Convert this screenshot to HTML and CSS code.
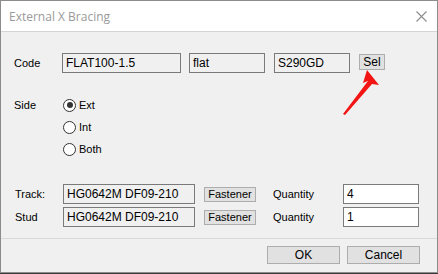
FILE: index.html
```html
<!DOCTYPE html>
<html lang="en">
<head>
    <meta charset="UTF-8">
    <link rel="stylesheet" href="styles.css">
    <title>External X Bracing</title>
</head>
<body>
    <div class="window">
        <div class="titlebar">
            <span class="title">External X Bracing</span>
            <svg class="close" width="11" height="11" viewBox="0 0 11 11">
                <path d="M0.5 0.5 L10.5 10.5 M10.5 0.5 L0.5 10.5" stroke="#8c8c8c" stroke-width="1.1" fill="none"/>
            </svg>
        </div>

        <div class="content">
            <div class="code-row">
                <label class="lbl">Code</label>
                <div class="field ro w-code">FLAT100-1.5</div>
                <div class="field ro w-flat">flat</div>
                <div class="field ro w-grade">S290GD</div>
                <button class="btn btn-sel">Sel</button>
            </div>

            <div class="side-row">
                <label class="lbl">Side</label>
                <div class="radios">
                    <div class="radio checked"><span class="dot"></span>Ext</div>
                    <div class="radio"><span class="dot"></span>Int</div>
                    <div class="radio"><span class="dot"></span>Both</div>
                </div>
            </div>

            <div class="parts">
                <div class="part-row">
                    <label class="lbl lbl-part">Track:</label>
                    <div class="field ro w-part">HG0642M DF09-210</div>
                    <button class="btn btn-fast">Fastener</button>
                    <label class="lbl-qty">Quantity</label>
                    <div class="field w-qty">4</div>
                </div>
                <div class="part-row">
                    <label class="lbl lbl-part">Stud</label>
                    <div class="field ro w-part">HG0642M DF09-210</div>
                    <button class="btn btn-fast">Fastener</button>
                    <label class="lbl-qty">Quantity</label>
                    <div class="field w-qty">1</div>
                </div>
            </div>
        </div>

        <div class="footer">
            <button class="btn btn-dlg">OK</button>
            <button class="btn btn-dlg">Cancel</button>
        </div>

        <!-- annotation arrow pointing at Sel -->
        <svg class="arrow" width="40" height="60" viewBox="0 0 40 60">
            <polygon points="26,2 38,17 31,16 4,47 2,46 27,13 22,15" fill="#f31414"/>
        </svg>
    </div>
</body>
</html>
```

FILE: styles.css
```css
body {
    margin: 0;
    background: #3a3a3a;
    font-family: "Liberation Sans", Arial, sans-serif;
    font-size: 11px;
    color: #000;
}

.window {
    position: relative;
    width: 436px;
    height: 271px;
    border: 1px solid #8c8c8c;
    background: #f0f0f0;
    display: flex;
    flex-direction: column;
}

.titlebar {
    height: 30px;
    background: #fff;
    border-bottom: 1px solid #d4d4d4;
    display: flex;
    align-items: center;
    justify-content: space-between;
    padding: 0 10px 0 8px;
}

.title {
    font-family: "Open Sans", "Noto Sans", sans-serif;
    font-size: 12px;
    color: #999;
}

.close {
    margin-top: 1px;
}

.content {
    flex: 1;
    padding: 21px 0 0 13px;
}

.lbl {
    width: 48px;
    flex: none;
}

.field {
    height: 20px;
    box-sizing: border-box;
    border: 1px solid #7a7a7a;
    background: #fff;
    padding: 0 3px;
    display: flex;
    align-items: center;
    font-size: 12px;
    white-space: nowrap;
}

.field.ro {
    background: #f0f0f0;
}

.btn {
    font-family: "Liberation Sans", Arial, sans-serif;
    font-size: 11px;
    color: #000;
    background: #e1e1e1;
    border: 1px solid #adadad;
    padding: 0;
    box-sizing: border-box;
}

.code-row {
    display: flex;
    align-items: flex-start;
    gap: 8px;
}

.code-row .lbl {
    width: 40px;
    line-height: 20px;
    font-size: 11px;
}

.w-code { width: 119px; }
.w-flat { width: 76px; }
.w-grade { width: 76px; margin-left: 1px; }

.btn-sel {
    width: 26px;
    height: 16px;
    margin-top: 1px;
    margin-left: 1px;
    font-size: 12px;
}

.side-row {
    display: flex;
    margin-top: 21px;
}

.side-row .lbl {
    line-height: 22px;
}

.radios {
    display: flex;
    flex-direction: column;
}

.radio {
    height: 22px;
    display: flex;
    align-items: center;
    gap: 3px;
    margin-left: 1px;
}

.dot {
    width: 11px;
    height: 11px;
    border: 1px solid #333;
    border-radius: 50%;
    background: #fff;
    position: relative;
}

.radio.checked .dot::after {
    content: "";
    position: absolute;
    left: 2.5px;
    top: 2.5px;
    width: 6px;
    height: 6px;
    border-radius: 50%;
    background: #333;
}

.parts {
    margin-top: 24px;
    display: flex;
    flex-direction: column;
    gap: 3px;
}

.part-row {
    display: flex;
    align-items: center;
}

.lbl-part {
    padding-left: 1px;
    width: 48px;
}

.w-part {
    width: 132px;
}

.btn-fast {
    width: 52px;
    height: 15px;
    margin-left: 9px;
}

.lbl-qty {
    margin-left: 17px;
    width: 70px;
}

.w-qty {
    width: 76px;
}

.footer {
    height: 34px;
    border-top: 1px solid #d9d9d9;
    display: flex;
    justify-content: flex-end;
    align-items: flex-start;
    gap: 7px;
    padding: 7px 17px 0 0;
    box-sizing: border-box;
}

.btn-dlg {
    width: 73px;
    height: 18px;
    font-size: 12px;
}

.arrow {
    position: absolute;
    left: 340px;
    top: 67px;
}
```
